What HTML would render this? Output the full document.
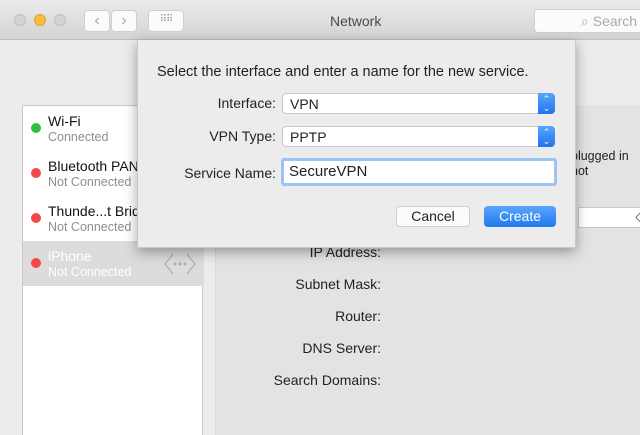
<!DOCTYPE html>
<html><head><style>
*{margin:0;padding:0;box-sizing:border-box}
body{width:640px;height:430px;overflow:hidden;background:#ececec;font-family:"Liberation Sans",sans-serif;font-size:14px;color:#222;position:relative}
.abs{position:absolute}
.tb{left:0;top:0;width:640px;height:40px;background:linear-gradient(#ebebeb,#d3d3d3);border-bottom:1px solid #c0c0c0}
.dot{width:12px;height:12px;border-radius:50%;top:14px}
.btn{background:#fbfbfb;border:1px solid #d0d0d0;border-radius:4px}
.list{left:22px;top:105px;width:181px;height:330px;background:#fff;border:1px solid #c8c8c8}
.item{position:absolute;left:0;width:181px;height:45px}
.item .d{position:absolute;left:8px;top:17px;width:10px;height:10px;border-radius:50%}
.item .n{position:absolute;left:25px;top:7px;font-size:14px;color:#111;white-space:nowrap}
.item .s{position:absolute;left:25px;top:24px;font-size:12.5px;color:#8e8e8e}
.right{left:215px;top:105px;width:430px;height:330px;background:#e3e3e3;border-left:1px solid #d8d8d8}
.lab{position:absolute;width:165px;text-align:right;font-size:14px;color:#222}
.sheet{left:137px;top:40px;width:439px;height:208px;background:#ececec;box-shadow:0 4px 12px rgba(0,0,0,.35);border:1px solid #c9c9c9;border-top:none}
.sl{position:absolute;width:138px;left:0;text-align:right;font-size:14px}
.pop{position:absolute;left:144px;width:273px;height:21px;background:#fff;border:1px solid #c8c8c8;border-radius:4px;padding:2px 7px;font-size:14px}
.pop .a{position:absolute;right:-1px;top:-1px;width:17px;height:21px;background:linear-gradient(#5aa5fb,#1f74f0);border-radius:0 4px 4px 0;color:#fff;font-size:9px;line-height:9px;text-align:center;padding-top:2px}
</style></head><body>
<div class="abs tb"></div>
<div class="abs dot" style="left:14px;background:#d3d3d3;border:1px solid #c0c0c0"></div>
<div class="abs dot" style="left:34px;background:#fcbb3a;border:1px solid #e0a030"></div>
<div class="abs dot" style="left:54px;background:#d3d3d3;border:1px solid #c0c0c0"></div>
<div class="abs btn" style="left:84px;top:10px;width:26px;height:22px;color:#aaa;text-align:center;line-height:20px;font-size:16px">‹</div>
<div class="abs btn" style="left:111px;top:10px;width:26px;height:22px;color:#aaa;text-align:center;line-height:20px;font-size:16px">›</div>
<div class="abs btn" style="left:148px;top:10px;width:36px;height:22px;color:#999;text-align:center;line-height:18px;font-size:10px;letter-spacing:-1px">⠿⠿</div>
<div class="abs" style="left:330px;top:13px;font-size:14px;color:#4a4a4a">Network</div>
<div class="abs btn" style="left:534px;top:9px;width:120px;height:24px;color:#aaa;font-size:14px;padding:3px 0 0 46px">⌕ Search</div>

<div class="abs list" style="border-bottom:none">
<div class="item" style="top:0"><div class="d" style="background:#2fc040"></div><div class="n">Wi-Fi</div><div class="s">Connected</div></div>
<div class="item" style="top:45px"><div class="d" style="background:#f24a4a"></div><div class="n">Bluetooth PAN</div><div class="s">Not Connected</div></div>
<div class="item" style="top:90px"><div class="d" style="background:#f24a4a"></div><div class="n">Thunde...t Bridge</div><div class="s">Not Connected</div></div>
<div class="item" style="top:135px;background:#dcdcdc"><div class="d" style="background:#f24a4a"></div><div class="n" style="color:#fff">iPhone</div><div class="s" style="color:#fff">Not Connected</div>
<svg style="position:absolute;left:140px;top:10px" width="34" height="26"><path d="M10 3L2 13L10 23M24 3L32 13L24 23" stroke="#a9aeb8" stroke-width="1.3" fill="none"/><circle cx="12" cy="13" r="1.5" fill="#a9aeb8"/><circle cx="17" cy="13" r="1.5" fill="#a9aeb8"/><circle cx="22" cy="13" r="1.5" fill="#a9aeb8"/></svg></div>
</div>

<div class="abs right">
<div class="abs" style="left:355px;top:44px;font-size:12.5px">plugged in</div>
<div class="abs" style="left:355px;top:59px;font-size:12.5px">not</div>
<div class="abs" style="left:362px;top:102px;width:70px;height:21px;background:#fff;border:1px solid #c8c8c8;border-right:none;text-align:right;padding-right:2px;color:#444">◇</div>
<div class="lab" style="left:0;top:139px">IP Address:</div>
<div class="lab" style="left:0;top:171px">Subnet Mask:</div>
<div class="lab" style="left:0;top:203px">Router:</div>
<div class="lab" style="left:0;top:235px">DNS Server:</div>
<div class="lab" style="left:0;top:267px">Search Domains:</div>
</div>

<div class="abs sheet">
<div class="abs" style="left:19px;top:24px;font-size:14.5px;white-space:nowrap">Select the interface and enter a name for the new service.</div>
<div class="sl" style="top:55px">Interface:</div>
<div class="pop" style="top:53px">VPN<div class="a">⌃<br>⌄</div></div>
<div class="sl" style="top:88px">VPN Type:</div>
<div class="pop" style="top:86px">PPTP<div class="a">⌃<br>⌄</div></div>
<div class="sl" style="top:125px">Service Name:</div>
<div class="abs" style="left:143px;top:118px;width:276px;height:28px;border:3px solid #9cc3f2;border-radius:3px;background:#fff;padding:2px 5px;font-size:15px">SecureVPN</div>
<div class="abs btn" style="left:258px;top:166px;width:74px;height:21px;text-align:center;line-height:19px;font-size:14px;border-radius:4px">Cancel</div>
<div class="abs" style="left:346px;top:166px;width:72px;height:21px;text-align:center;line-height:21px;font-size:14px;color:#fff;border-radius:4px;background:linear-gradient(#5aa6fb,#2078f0)">Create</div>
</div>
</body></html>
